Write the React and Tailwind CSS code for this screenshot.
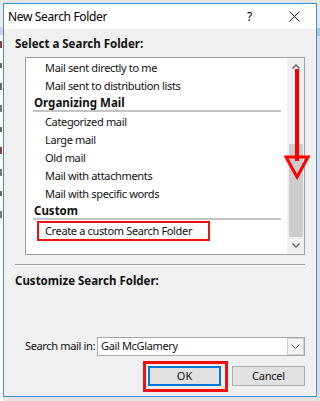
import React from "react";

const Item = ({ children }) => (
  <div className="h-[18px] flex items-center pl-[19px] text-[11px] tracking-[-0.35px] text-[#111] whitespace-nowrap">{children}</div>
);

const Header = ({ children }) => (
  <div className="flex flex-col">
    <div className="h-[15px] flex items-center pl-[8px] text-[11.5px] font-bold text-[#111] whitespace-nowrap">{children}</div>
    <div className="ml-[7px] w-[248px] h-[2px] bg-[#c4c4c4]" />
    <div className="h-[1px]" />
  </div>
);

export default function App() {
  return (
    <div className="w-[320px] h-[401px] bg-[#e4e4e4] overflow-hidden font-['Noto_Sans',sans-serif] flex">
      {/* left strip of underlying window */}
      <div className="w-[3px] flex flex-col">
        <div className="h-[27px] bg-[#ececec]" />
        <div className="h-[8px] bg-[#c9d2de]" />
        <div className="flex-1 bg-white flex flex-col gap-[15px] pt-[6px]">
          <div className="h-[7px] w-[2px] bg-[#8a4040]" />
          <div className="h-[5px] w-[2px] bg-[#666]" />
          <div className="h-[7px] w-[2px] bg-[#666]" />
          <div className="h-[7px] w-[2px] bg-[#777]" />
          <div className="h-[5px] w-[2px] bg-[#666]" />
          <div className="h-[7px] w-[2px] bg-[#8a4040]" />
          <div className="h-[7px] w-[2px] bg-[#777]" />
          <div className="h-[5px] w-[2px] bg-[#666]" />
          <div className="h-[7px] w-[2px] bg-[#777]" />
        </div>
      </div>
      {/* dialog */}
      <div className="mt-[3px] w-[314px] h-[394px] border border-[#3d8edb] bg-[#f0f0f0] flex flex-col shrink-0">
        {/* title bar */}
        <div className="h-[25px] bg-white flex items-center relative shrink-0">
          <span className="pl-[4px] text-[12px] tracking-[-0.35px] text-black">New Search Folder</span>
          <span className="absolute left-[243px] top-[4px] text-[12px] text-black">?</span>
          <svg className="absolute left-[285px] top-[7px]" width="11" height="11" viewBox="0 0 11 11">
            <path d="M0.5 0.5 L10.5 10.5 M10.5 0.5 L0.5 10.5" stroke="#111" strokeWidth="1" fill="none" />
          </svg>
        </div>

        {/* Select label */}
        <div className="mt-[7px] h-[16px] flex items-center pl-[11px] text-[11.5px] font-bold text-[#111]">
          Select a Search Folder:
        </div>

        {/* listbox */}
        <div className="mt-[5px] ml-[21px] w-[280px] h-[198px] border border-[#a0a0a0] bg-white flex relative shrink-0">
          <div className="flex-1 flex flex-col pt-[1px] overflow-hidden">
            <Item>Mail sent directly to me</Item>
            <Item>Mail sent to distribution lists</Item>
            <Header>Organizing Mail</Header>
            <Item>Categorized mail</Item>
            <Item>Large mail</Item>
            <Item>Old mail</Item>
            <Item>Mail with attachments</Item>
            <Item>Mail with specific words</Item>
            <Header>Custom</Header>
            <div className="h-[20px] flex">
              <div className="ml-[11px] w-[173px] h-[20px] border-2 border-[#ee1111] flex items-center pl-[6px] text-[11px] tracking-[-0.35px] text-[#111] whitespace-nowrap">
                Create a custom Search Folder
              </div>
            </div>
          </div>
          {/* scrollbar */}
          <div className="w-[17px] bg-[#f0f0f0] flex flex-col">
            <div className="h-[17px] flex items-center justify-center">
              <svg width="8" height="5" viewBox="0 0 8 5">
                <path d="M0.5 4.5 L4 1 L7.5 4.5" stroke="#606060" strokeWidth="1.4" fill="none" />
              </svg>
            </div>
            <div className="flex-1 flex flex-col justify-end items-center">
              <div className="w-[14px] h-[93px] bg-[#cdcdcd]" />
            </div>
            <div className="h-[17px] flex items-center justify-center">
              <svg width="8" height="5" viewBox="0 0 8 5">
                <path d="M0.5 0.5 L4 4 L7.5 0.5" stroke="#606060" strokeWidth="1.4" fill="none" />
              </svg>
            </div>
          </div>
          {/* red arrow annotation */}
          <svg className="absolute left-[258px] top-[10px]" width="28" height="112" viewBox="0 0 28 112">
            <rect x="11" y="1" width="4" height="92" fill="#ff0000" />
            <path d="M2 89 L24 89 L13 109 Z" stroke="#ff0000" strokeWidth="3" fill="none" strokeLinejoin="miter" />
          </svg>
        </div>

        {/* separator */}
        <div className="mt-[9px] ml-[11px] w-[290px] h-[1px] bg-[#a0a0a0]" />
        <div className="ml-[11px] w-[290px] h-[1px] bg-white" />

        {/* Customize label */}
        <div className="mt-[7px] h-[16px] flex items-center pl-[11px] text-[11.5px] font-bold text-[#111]">
          Customize Search Folder:
        </div>

        {/* search mail in */}
        <div className="mt-[48px] h-[19px] flex items-center">
          <span className="ml-[21px] w-[72px] shrink-0 text-[11px] tracking-[-0.35px] text-[#111] whitespace-nowrap">Search mail in:</span>
          <div className="w-[208px] h-[19px] shrink-0 border border-[#a8a8a8] bg-white flex items-center">
            <span className="flex-1 pl-[3px] text-[11px] tracking-[-0.35px] text-[#111]">Gail McGlamery</span>
            <div className="w-[17px] h-[17px] border border-[#cfcfcf] bg-[#f4f4f4] flex items-center justify-center">
              <svg width="9" height="5" viewBox="0 0 9 5">
                <path d="M0.5 0.5 L4.5 4.5 L8.5 0.5" stroke="#555" strokeWidth="1" fill="none" />
              </svg>
            </div>
          </div>
        </div>

        {/* buttons */}
        <div className="mt-[5px] flex items-start pl-[139px]">
          <div className="w-[85px] h-[31px] border-[3px] border-[#ee1111] pt-[2px] pl-[2px]">
            <div className="w-[73px] h-[20px] border-2 border-[#0078d7] bg-[#e1e1e1] flex items-center justify-center text-[11px] text-[#111]">
              OK
            </div>
          </div>
          <div className="ml-[4px] mt-[5px] w-[73px] h-[20px] border border-[#adadad] bg-[#e1e1e1] flex items-center justify-center text-[11px] tracking-[-0.2px] text-[#111]">
            Cancel
          </div>
        </div>
      </div>
      {/* right strip */}
      <div className="flex-1 flex flex-col">
        <div className="h-[28px] bg-[#e8e8e8]" />
        <div className="h-[8px] bg-[#b8c4d4]" />
        <div className="flex-1 bg-[#dedede]" />
      </div>
    </div>
  );
}
